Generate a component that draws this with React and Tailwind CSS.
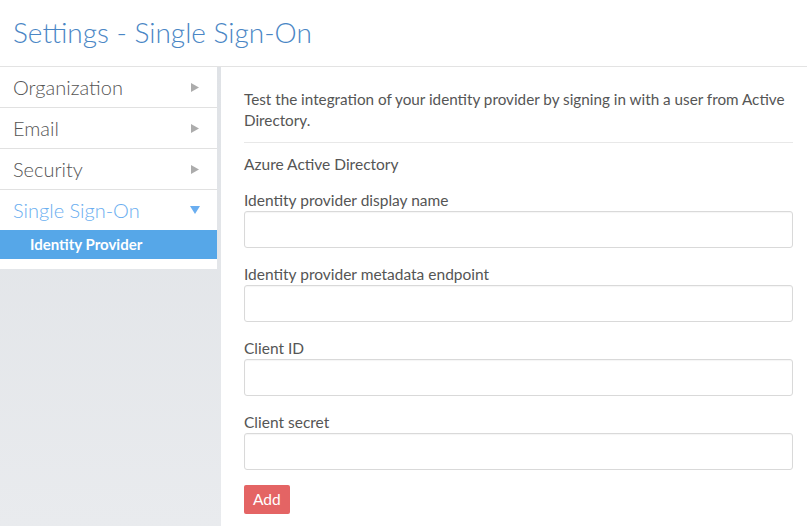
import React from 'react';

const menu = [
  { label: 'Organization' },
  { label: 'Email' },
  { label: 'Security' },
];

const fields = [
  'Identity provider display name',
  'Identity provider metadata endpoint',
  'Client ID',
  'Client secret',
];

const RightArrow = () => (
  <svg width="8" height="9" viewBox="0 0 8 9" className="mr-[18px]">
    <path d="M0 0 L8 4.5 L0 9 Z" fill="#acacac" />
  </svg>
);

const DownArrow = () => (
  <svg width="10" height="8" viewBox="0 0 10 8" className="mr-[17px]">
    <path d="M0 0 L10 0 L5 8 Z" fill="#6aaef0" />
  </svg>
);

export default function App() {
  return (
    <div className="min-h-[526px] w-[807px] bg-white flex flex-col font-['Lato',sans-serif]">
      <header className="h-[67px] border-b border-[#e3e3e3] flex items-center pl-[13px]">
        <h1 className="text-[28px] font-light text-[#4a86c5] leading-none -mt-[3px]">
          Settings - Single Sign-On
        </h1>
      </header>

      <div className="flex flex-1">
        <aside className="w-[221px] bg-gradient-to-b from-[#dfe2e6] to-[#e9ebee]">
          <nav className="w-[217px] bg-white pb-[10px]">
            {menu.map((item) => (
              <div
                key={item.label}
                className="h-[41px] border-b border-[#e1e1e1] flex items-center justify-between pl-[13px]"
              >
                <span className="text-[20px] font-light text-[#555555]">{item.label}</span>
                <RightArrow />
              </div>
            ))}
            <div className="h-[40px] flex items-center justify-between pl-[13px]">
              <span className="text-[20px] font-light text-[#6aaef0]">Single Sign-On</span>
              <DownArrow />
            </div>
            <div className="h-[29px] bg-[#56a7e8] flex items-center pl-[30px]">
              <span className="text-[15px] font-bold text-white">Identity Provider</span>
            </div>
          </nav>
        </aside>

        <main className="flex-1 pl-[23px] pr-[14px] pt-[22px] text-[15.5px] text-[#555555]">
          <p className="leading-[21px] text-[15.25px] -mr-[12px]">
            Test the integration of your identity provider by signing in with a user from Active Directory.
          </p>
          <hr className="border-t border-[#e8e8e8] mt-[11px] mb-[11px]" />
          <div className="leading-[20px] mb-[1px]">Azure Active Directory</div>

          {fields.map((f) => (
            <div key={f} className="mt-[16px]">
              <label className="block leading-[20px] mb-[1px]">{f}</label>
              <input
                type="text"
                className="block w-full h-[37px] rounded-[3px] border border-[#d9d9d9] bg-white outline-none shadow-[inset_0_1px_1px_rgba(0,0,0,0.04)]"
              />
            </div>
          ))}

          <button className="mt-[15px] h-[29px] px-[9px] rounded-[2px] bg-[#e46464] text-white text-[15.5px] leading-none">
            Add
          </button>
        </main>
      </div>
    </div>
  );
}
